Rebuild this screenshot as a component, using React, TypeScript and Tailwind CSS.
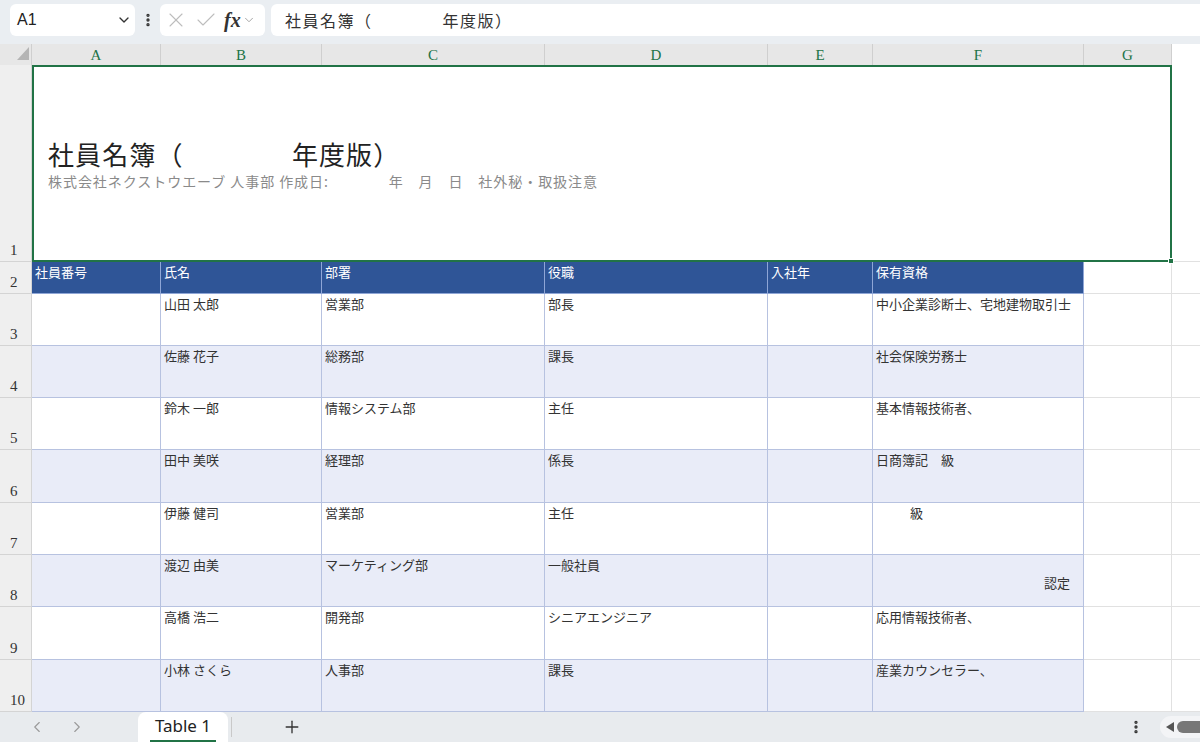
import React from 'react';
import { X, Check, ChevronDown, ChevronLeft, ChevronRight, Plus, EllipsisVertical } from 'lucide-react';

type Staff = {
  name: string;
  dept: string;
  title: string;
  cert: React.ReactNode;
};

const staff: Staff[] = [
  { name: '山田 太郎', dept: '営業部', title: '部長', cert: '中小企業診断士、宅地建物取引士' },
  { name: '佐藤 花子', dept: '総務部', title: '課長', cert: '社会保険労務士' },
  { name: '鈴木 一郎', dept: '情報システム部', title: '主任', cert: '基本情報技術者、' },
  { name: '田中 美咲', dept: '経理部', title: '係長', cert: '日商簿記　級' },
  { name: '伊藤 健司', dept: '営業部', title: '主任', cert: <span className="pl-[34px]">級</span> },
  {
    name: '渡辺 由美',
    dept: 'マーケティング部',
    title: '一般社員',
    cert: (
      <>
        <div>&nbsp;</div>
        <div className="text-right pr-[13px]">認定</div>
      </>
    ),
  },
  { name: '高橋 浩二', dept: '開発部', title: 'シニアエンジニア', cert: '応用情報技術者、' },
  { name: '小林 さくら', dept: '人事部', title: '課長', cert: '産業カウンセラー、' },
];

const heads = ['社員番号', '氏名', '部署', '役職', '入社年', '保有資格'];
const letters = ['A', 'B', 'C', 'D', 'E', 'F', 'G'];
const rowHeights = ['h-[52px]', 'h-[52px]', 'h-[52px]', 'h-[53px]', 'h-[52px]', 'h-[52px]', 'h-[53px]', 'h-[52px]'];

const jp = { fontFamily: '"Noto Sans CJK JP", "Noto Sans", sans-serif' };
const serif = { fontFamily: '"Liberation Serif", "DejaVu Serif", serif' };

const grid = 'grid grid-cols-[32px_129px_161px_223px_223px_105px_211px_88px_28px]';

// row number cell on the left edge
const RowNum = ({ n }: { n: number }) => (
  <div
    className="bg-[#efefef] border-b border-r border-[#d4d4d4] flex items-end pl-[10px] pb-[3px] text-[15px] leading-[16px] text-[#333]"
    style={serif}
  >
    {n}
  </div>
);

export default function App() {
  return (
    <div className="w-[1200px] h-[742px] overflow-hidden bg-white flex flex-col" style={jp}>
      {/* formula bar */}
      <div className="h-[44px] bg-[#eaeef2] flex items-start pt-[4px] pl-[10px] shrink-0">
        <div className="w-[125px] h-[32px] bg-white rounded-md flex items-center justify-between pl-[7px] pr-[3px]">
          <span className="text-[16px] text-[#222]" style={{ fontFamily: '"Liberation Sans", sans-serif' }}>A1</span>
          <ChevronDown size={16} strokeWidth={2} className="text-[#333]" />
        </div>
        <div className="w-[25px] h-[32px] flex items-center justify-center">
          <EllipsisVertical size={16} strokeWidth={3} className="text-[#333]" />
        </div>
        <div className="w-[105px] h-[32px] bg-white rounded-md flex items-center pl-[4px] gap-[6px]">
          <X size={24} strokeWidth={1.1} className="text-[#bdbdbd]" />
          <Check size={24} strokeWidth={1.1} className="text-[#bdbdbd]" />
          <span className="text-[20px] font-bold italic text-[#333] leading-none" style={serif}>fx</span>
          <ChevronDown size={14} strokeWidth={1.5} className="text-[#999] -ml-[5px]" />
        </div>
        <div className="ml-[6px] flex-1 h-[32px] bg-white rounded-l-md flex items-center pl-[14px] text-[16px] tracking-[1.5px] text-[#333]">
          社員名簿（　　　　年度版）
        </div>
      </div>

      {/* column letters */}
      <div className={`${grid} h-[21px] bg-[#e7e7e7] shrink-0`}>
        <div className="relative border-r border-[#cfcfcf]">
          <div
            className="absolute left-[17px] top-[3px] w-[12px] h-[13px] bg-[#b5b5b5]"
            style={{ clipPath: 'polygon(100% 0, 100% 100%, 0 100%)' }}
          />
        </div>
        {letters.map((l) => (
          <div
            key={l}
            className="border-r border-[#cfcfcf] flex items-center justify-center text-[15px] text-[#217346]"
            style={serif}
          >
            {l}
          </div>
        ))}
        <div className="bg-white" />
      </div>

      {/* row 1 : merged title cell */}
      <div className={`${grid} h-[197px] shrink-0`}>
        <RowNum n={1} />
        <div className="col-span-7 relative border-2 border-[#217346] flex flex-col justify-center pl-[14px] pt-[2px]">
          <div className="text-[26px] leading-[32px] tracking-[1.1px] text-[#222]">社員名簿（　　　　年度版）</div>
          <div className="text-[14px] leading-[22px] text-[#8a8a8a] tracking-[0.95px]">
            株式会社ネクストウエーブ 人事部 作成日:　　　　年　月　日　社外秘・取扱注意
          </div>
          <div className="absolute -right-[4px] -bottom-[4px] w-[6px] h-[6px] bg-[#217346] border border-white" />
        </div>
        <div className="border-b border-[#e1e1e1]" />
      </div>

      {/* row 2 : table header */}
      <div className={`${grid} h-[32px] shrink-0`}>
        <RowNum n={2} />
        {heads.map((h) => (
          <div
            key={h}
            className="bg-[#2f5597] border-r border-b border-[#8fa6d6] pl-[3px] pt-[1px] text-[13px] leading-[18px] text-white"
          >
            {h}
          </div>
        ))}
        <div className="border-r border-b border-[#e1e1e1]" />
        <div className="border-b border-[#e1e1e1]" />
      </div>

      {/* data rows */}
      {staff.map((s, i) => {
        const bg = i % 2 === 1 ? 'bg-[#e9ecf8]' : 'bg-white';
        const cells: React.ReactNode[] = ['', s.name, s.dept, s.title, '', s.cert];
        return (
          <div key={i} className={`${grid} ${rowHeights[i]} shrink-0`}>
            <RowNum n={i + 3} />
            {cells.map((c, j) => (
              <div
                key={j}
                className={`${bg} border-r border-b border-[#b7c2e0] pl-[3px] pt-[1px] text-[13px] leading-[18px] text-[#333] whitespace-pre`}
              >
                {c}
              </div>
            ))}
            <div className="border-r border-b border-[#e1e1e1]" />
            <div className="border-b border-[#e1e1e1]" />
          </div>
        );
      })}

      {/* sheet tabs */}
      <div className="h-[30px] bg-[#e8ebee] flex items-stretch relative shrink-0">
        <div className="w-[138px] flex items-center pl-[28px] gap-[22px] text-[#9a9a9a]">
          <ChevronLeft size={18} strokeWidth={1.5} />
          <ChevronRight size={18} strokeWidth={1.5} />
        </div>
        <div className="w-[90px] bg-white rounded-t-lg flex flex-col items-center justify-end">
          <span className="text-[17px] leading-[22px] text-[#222] pb-[3px]" style={{ fontFamily: '"Noto Sans", sans-serif' }}>Table 1</span>
          <div className="w-[66px] h-[2px] bg-[#217346]" />
        </div>
        <div className="w-[1px] bg-[#c9c9c9] my-[5px] ml-[3px]" />
        <div className="w-[120px] flex items-center justify-center text-[#333]">
          <Plus size={20} strokeWidth={1.6} />
        </div>
        <div className="flex-1" />
        <div className="flex items-center pr-[16px] text-[#333]">
          <EllipsisVertical size={16} strokeWidth={3} />
        </div>
        <div className="w-[40px] flex items-center">
          <div className="h-[22px] flex-1 bg-[#f3f4f6] rounded-l-full flex items-center pl-[6px] gap-[3px]">
            <div
              className="w-[8px] h-[10px] bg-[#555]"
              style={{ clipPath: 'polygon(0 50%, 100% 0, 100% 100%)' }}
            />
            <div className="flex-1 h-[12px] bg-[#777] rounded-l-full" />
          </div>
        </div>
      </div>
    </div>
  );
}
